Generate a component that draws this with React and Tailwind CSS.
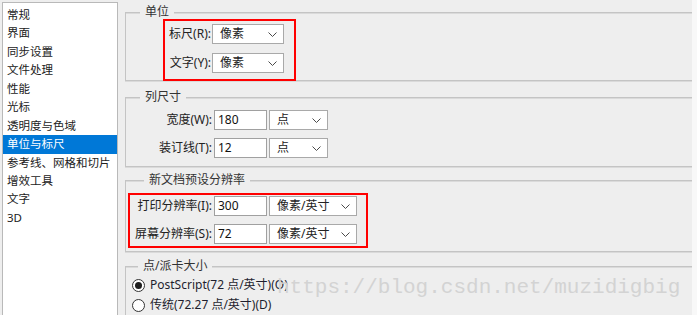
import React from "react";

function Chevron() {
  return (
    <svg width="9" height="5" viewBox="0 0 9 5" className="shrink-0">
      <polyline points="0.5,0.5 4.5,4.5 8.5,0.5" fill="none" stroke="#4a4a4a" strokeWidth="1" />
    </svg>
  );
}

function Select({ className, text }) {
  return (
    <div className={`h-[20px] flex items-center justify-between bg-white border border-[#a9a9a9] pl-[7px] pr-[6px] text-[12px] leading-[18px] text-[#222] ${className}`}>
      <span>{text}</span>
      <Chevron />
    </div>
  );
}

function Input({ value }) {
  return (
    <div className="w-[53px] h-[20px] ml-[2px] flex items-center bg-white border border-[#a0a0a0] pl-[3px] text-[12px] leading-[18px] text-[#111]">
      {value}
    </div>
  );
}

function Group({ title, titleClass, className, children }) {
  return (
    <div className={`relative mr-[-12px] border border-[#c4c4c4] shadow-[inset_0_1px_0_#dadada,0_1px_0_#dadada] ${className}`}>
      <span className={`absolute top-[-9px] px-[5px] bg-[#eeeeee] text-[12px] leading-[16px] text-[#333] whitespace-nowrap ${titleClass}`}>
        {title}
      </span>
      {children}
    </div>
  );
}

const items = [
  "常规",
  "界面",
  "同步设置",
  "文件处理",
  "性能",
  "光标",
  "透明度与色域",
  "单位与标尺",
  "参考线、网格和切片",
  "增效工具",
  "文字",
  "3D",
];

export default function App() {
  return (
    <div className="relative w-[697px] h-[315px] overflow-hidden flex bg-[#eeeeee] font-[family-name:'Noto_Sans','Noto_Sans_CJK_SC',sans-serif] text-[#222]">
      {/* left list */}
      <div className="ml-[2px] mt-[2px] w-[116px] h-[330px] shrink-0 bg-white border border-[#b9b9b9] pt-[3px] text-[11.5px] text-[#222]">
        {items.map((t, i) => (
          <div
            key={i}
            className={
              i === 7
                ? "h-[18.45px] leading-[18.45px] pl-[4px] bg-[#0078d7] text-white whitespace-nowrap"
                : "h-[18.45px] leading-[18.45px] pl-[4px] whitespace-nowrap"
            }
          >
            {t}
          </div>
        ))}
      </div>

      {/* main panel */}
      <div className="w-[574px] shrink-0 overflow-hidden pl-[7px] pt-[12px] bg-[#eeeeee]">
        <Group title="单位" titleClass="left-[14px]" className="pt-[11px] pb-[7px] flex flex-col gap-[9px]">
          <div className="flex items-center h-[20px]">
            <span className="w-[85px] text-right text-[12px] leading-[20px]">标尺(R):</span>
            <Select className="w-[72px] ml-[1px]" text="像素" />
          </div>
          <div className="flex items-center h-[20px]">
            <span className="w-[85px] text-right text-[12px] leading-[20px]">文字(Y):</span>
            <Select className="w-[72px] ml-[1px]" text="像素" />
          </div>
        </Group>

        <Group title="列尺寸" titleClass="left-[14px]" className="mt-[16px] pt-[12px] pb-[8px] flex flex-col gap-[8px]">
          <div className="flex items-center h-[20px]">
            <span className="w-[86px] text-right text-[12px] leading-[20px]">宽度(W):</span>
            <Input value="180" />
            <Select className="w-[59px] ml-[2px]" text="点" />
          </div>
          <div className="flex items-center h-[20px]">
            <span className="w-[86px] text-right text-[12px] leading-[20px]">装订线(T):</span>
            <Input value="12" />
            <Select className="w-[59px] ml-[2px]" text="点" />
          </div>
        </Group>

        <Group title="新文档预设分辨率" titleClass="left-[18px]" className="mt-[13px] pt-[15px] pb-[7px] flex flex-col gap-[8px]">
          <div className="flex items-center h-[20px]">
            <span className="w-[86px] text-right text-[12px] leading-[20px] whitespace-nowrap">打印分辨率(I):</span>
            <Input value="300" />
            <Select className="w-[88px] ml-[2px]" text="像素/英寸" />
          </div>
          <div className="flex items-center h-[20px]">
            <span className="w-[86px] text-right text-[12px] leading-[20px] whitespace-nowrap">屏幕分辨率(S):</span>
            <Input value="72" />
            <Select className="w-[88px] ml-[2px]" text="像素/英寸" />
          </div>
        </Group>

        <Group title="点/派卡大小" titleClass="left-[12px]" className="mt-[14px] pt-[8px] h-[70px] flex flex-col">
          <div className="flex items-center h-[20px] pl-[6px]">
            <span className="w-[13px] h-[13px] rounded-full border border-[#333] bg-white flex items-center justify-center shrink-0">
              <span className="w-[7px] h-[7px] rounded-full bg-[#1e1e1e]" />
            </span>
            <span className="ml-[5px] text-[12px] leading-[20px] text-[#1e1e2e] whitespace-nowrap">PostScript(72 点/英寸)(O)</span>
          </div>
          <div className="flex items-center h-[20px] pl-[6px]">
            <span className="w-[13px] h-[13px] rounded-full border border-[#333] bg-white shrink-0" />
            <span className="ml-[5px] text-[12px] leading-[20px] text-[#1e1e2e] whitespace-nowrap">传统(72.27 点/英寸)(D)</span>
          </div>
        </Group>
      </div>

      <div className="w-[5px] shrink-0 bg-[#f8f8f8]" />

      {/* red annotation boxes */}
      <div className="absolute left-[163px] top-[19px] w-[133px] h-[62px] border-2 border-[#ff0000] pointer-events-none" />
      <div className="absolute left-[128px] top-[193px] w-[240px] h-[55px] border-2 border-[#ff0000] pointer-events-none" />

      {/* watermark */}
      <div className="absolute left-[277px] top-[277px] text-[21px] leading-[21px] text-[#d3d3d3] whitespace-nowrap pointer-events-none font-[family-name:'Liberation_Mono',monospace]">
        https://blog.csdn.net/muzidigbig
      </div>
    </div>
  );
}
